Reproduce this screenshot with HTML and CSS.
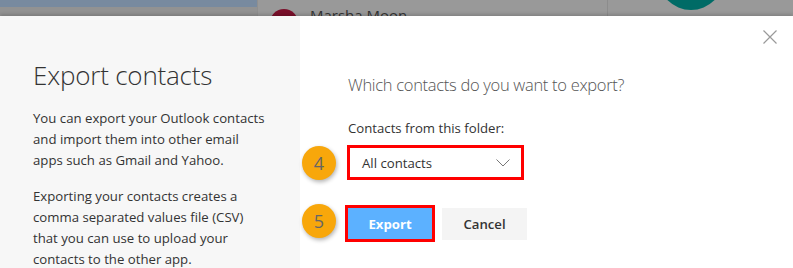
FILE: index.html
```html
<!DOCTYPE html>
<html lang="en">
<head>
<meta charset="utf-8">
<title>Export contacts</title>
<link rel="stylesheet" href="styles.css">
</head>
<body>
<div class="backdrop">
  <div class="bd-left"></div>
  <div class="bd-mid">
    <span class="avatar maroon"></span>
    <span class="bd-name">Marsha Moon</span>
  </div>
  <div class="bd-right">
    <span class="avatar teal"></span>
  </div>
</div>
<div class="dialog">
  <aside class="info">
    <h1 class="title">Export contacts</h1>
    <p class="para">You can export your Outlook contacts<br>and import them into other email<br>apps such as Gmail and Yahoo.</p>
    <p class="para">Exporting your contacts creates a<br>comma separated values file (CSV)<br>that you can use to upload your<br>contacts to the other app.</p>
  </aside>
  <main class="form">
    <button class="close" aria-label="Close">
      <svg width="14" height="14" viewBox="0 0 14 14"><path d="M0.5 0.5 L13.5 13.5 M13.5 0.5 L0.5 13.5" stroke="#9a9a9a" stroke-width="1.2" fill="none"/></svg>
    </button>
    <h2 class="question">Which contacts do you want to export?</h2>
    <label class="label">Contacts from this folder:</label>
    <div class="step-row">
      <span class="badge">4</span>
      <div class="select hl">
        <span>All contacts</span>
        <svg width="14" height="8" viewBox="0 0 14 8"><path d="M0.5 0.5 L7 7 L13.5 0.5" stroke="#777" stroke-width="1" fill="none"/></svg>
      </div>
    </div>
    <div class="step-row buttons">
      <span class="badge b5">5</span>
      <div class="hl btn-wrap"><button class="btn primary">Export</button></div>
      <button class="btn secondary">Cancel</button>
    </div>
  </main>
</div>
</body>
</html>
```

FILE: styles.css
```css
* { box-sizing: border-box; }
html, body { margin: 0; padding: 0; }
body {
  width: 793px;
  height: 268px;
  overflow: hidden;
  font-family: "Open Sans", "Segoe UI", sans-serif;
  background: #fff;
}
.backdrop {
  display: flex;
  height: 16px;
  overflow: hidden;
  background: #999;
}
.bd-left {
  width: 257px;
  background: linear-gradient(#788a9f 0, #788a9f 7px, #929292 7px, #929292 100%);
}
.bd-mid {
  position: relative;
  width: 351px;
  border-left: 1px solid #8f8f8f;
  border-right: 1px solid #8c8c8c;
}
.bd-right {
  position: relative;
  flex: 1;
}
.avatar {
  position: absolute;
  border-radius: 50%;
}
.maroon {
  left: 12px;
  top: 9px;
  width: 28px;
  height: 28px;
  background: #7a0f2a;
}
.teal {
  left: 50px;
  top: -56px;
  width: 66px;
  height: 66px;
  background: #006b66;
}
.bd-name {
  position: absolute;
  left: 52px;
  top: 5px;
  font-size: 15px;
  line-height: 20px;
  color: #333;
}
.dialog {
  display: flex;
  height: 252px;
  box-shadow: 0 -2px 3px rgba(0,0,0,0.15);
  position: relative;
}
.info {
  width: 300px;
  flex: none;
  background: #f7f7f7;
  padding: 43px 0 0 33px;
}
.title {
  margin: 0 0 17px;
  font-size: 26px;
  line-height: 32px;
  font-weight: 300;
  color: #333;
  letter-spacing: -0.2px;
}
.para {
  margin: 0 0 15px;
  font-size: 13.2px;
  line-height: 21px;
  color: #333;
  white-space: nowrap;
}
.form {
  flex: 1;
  position: relative;
  padding: 57px 0 0 48px;
}
.close {
  position: absolute;
  right: 16px;
  top: 14px;
  border: 0;
  padding: 0;
  background: none;
  width: 14px;
  height: 14px;
  line-height: 0;
}
.question {
  margin: 0 0 21px;
  font-size: 16.5px;
  line-height: 24px;
  font-weight: 300;
  color: #555;
  letter-spacing: -0.3px;
}
.label {
  display: block;
  font-size: 13.2px;
  line-height: 21px;
  color: #333;
  margin-bottom: 6px;
}
.step-row {
  position: relative;
  display: flex;
  align-items: center;
}
.badge {
  position: absolute;
  left: -46px;
  top: 50%;
  margin-top: -17px;
  width: 34px;
  height: 34px;
  border-radius: 50%;
  background: #f8a70b;
  box-shadow: 1px 2px 4px rgba(0,0,0,0.3);
  color: #666;
  font-size: 18px;
  line-height: 34px;
  text-align: center;
}
.hl {
  border: 3px solid #f00;
}
.select {
  width: 177px;
  height: 35px;
  margin-left: -1px;
  display: flex;
  align-items: center;
  justify-content: space-between;
  padding: 0 11px 0 12px;
  font-size: 13.2px;
  color: #333;
}
.buttons {
  margin-top: 25px;
}
.b5 { margin-top: -20px; }
.btn-wrap {
  margin-left: -3px;
  width: 90px;
  height: 37px;
}
.btn {
  border: 0;
  font-family: inherit;
  font-size: 13.2px;
  cursor: pointer;
}
.primary {
  width: 100%;
  height: 100%;
  background: #5cb1ff;
  color: #fff;
  font-weight: 700;
}
.secondary {
  margin-left: 7px;
  width: 85px;
  height: 32px;
  background: #f4f4f4;
  color: #333;
  font-weight: 600;
}
```
